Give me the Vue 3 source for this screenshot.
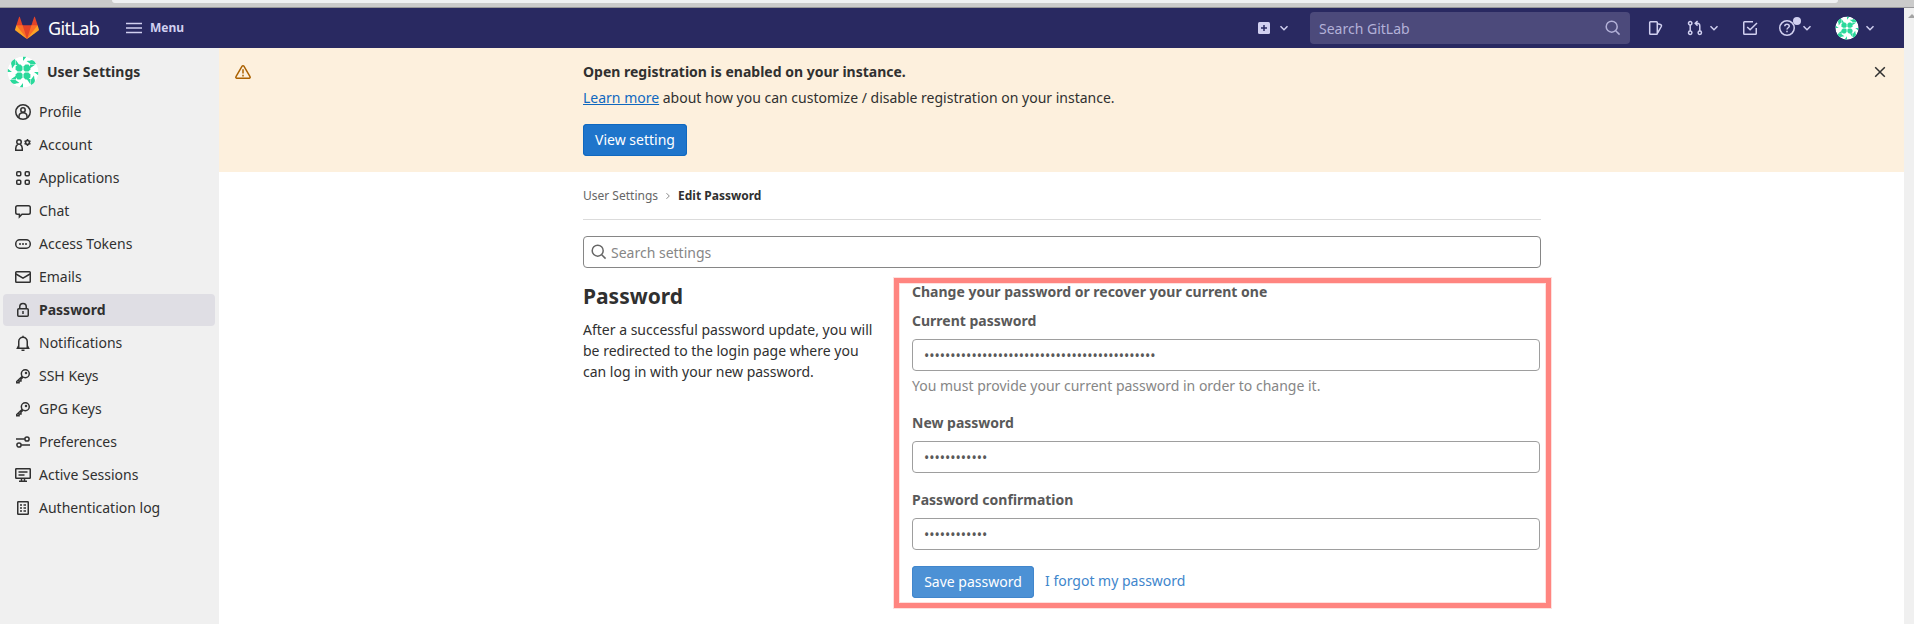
<script setup>
const nav = [
  { label: 'Profile', icon: 'profile' },
  { label: 'Account', icon: 'account' },
  { label: 'Applications', icon: 'apps' },
  { label: 'Chat', icon: 'chat' },
  { label: 'Access Tokens', icon: 'token' },
  { label: 'Emails', icon: 'mail' },
  { label: 'Password', icon: 'lock', active: true },
  { label: 'Notifications', icon: 'bell' },
  { label: 'SSH Keys', icon: 'key' },
  { label: 'GPG Keys', icon: 'key' },
  { label: 'Preferences', icon: 'prefs' },
  { label: 'Active Sessions', icon: 'monitor' },
  { label: 'Authentication log', icon: 'log' },
]
const icons = {
  profile: '<circle cx="8" cy="8" r="7.25"/><circle cx="8" cy="6" r="2.2"/><path d="M4 13.6v-1.1C4 10.300 5.600 8.700 8 8.700s4 1.600 4 3.800v1.100"/>',
  account: '<circle cx="4" cy="5" r="2.250"/><path d="M2.700 7.300C1.300 8.300.75 9.700.75 11.300v2h6.500v-2c0-1.600-.55-3-1.950-4"/><circle cx="12.500" cy="5.500" r="1.900"/><path d="M12.500 2v1.200M12.500 7.800V9M9.500 3.800l1 .6M14.500 6.600l1 .6M15.500 3.800l-1 .6M10.500 6.600l-1 .6"/>',
  apps: '<rect x="1.750" y="1.750" width="4" height="4" rx="1"/><rect x="10.250" y="1.750" width="4" height="4" rx="1"/><rect x="1.750" y="10.250" width="4" height="4" rx="1"/><rect x="10.250" y="10.250" width="4" height="4" rx="1"/>',
  chat: '<path d="M2.500 2.750h11a1.750 1.750 0 0 1 1.750 1.750v5a1.750 1.750 0 0 1-1.750 1.750H7l-2.600 2.600v-2.600H2.500A1.750 1.750 0 0 1 .75 9.500v-5A1.750 1.750 0 0 1 2.500 2.750z"/>',
  token: '<rect x=".75" y="3.750" width="14.500" height="8.500" rx="4"/><path d="M4 8h2M7 8h2M10 8h2"/>',
  mail: '<rect x=".75" y="2.750" width="14.500" height="10.500" rx=".8"/><path d="M1 5l7 4.200L15 5"/>',
  lock: '<rect x="2.750" y="6.750" width="10.500" height="7.500" rx="1"/><path d="M4.750 6.500V4.800a3.250 3.250 0 0 1 6.500 0v1.700M8 9v3"/>',
  bell: '<path d="M8 .8v1M3.750 12.500V6.500a4.250 4.250 0 0 1 8.500 0v6M3.750 10.500L2.400 13.250h11.200l-1.350-2.750M6.500 15.200h3"/>',
  key: '<circle cx="10.300" cy="5.700" r="3.950"/><path d="M7.300 8.300l-5.550 5.200v1.300h2.300v-1.900h1.900v-1.700l2-1.900"/><circle cx="11" cy="5" r=".5"/>',
  prefs: '<circle cx="12" cy="5" r="2.100"/><circle cx="4" cy="11" r="2.100"/><path d="M1 5h8.800M6.200 11H15"/>',
  monitor: '<rect x=".75" y="1.750" width="14.500" height="9.500" rx=".6"/><path d="M3.500 5h9M3.500 8h6M6.500 11v3M9.500 11v3M4 14.250h8"/>',
  log: '<rect x="2.750" y="1.750" width="10.500" height="12.500" rx=".6"/><path d="M5 5h2M8.500 5H11M5 8h2M8.500 8H11M5 11h2M8.500 11H11"/>',
}
const settings = '<circle cx="6.700" cy="6.700" r="5.500"/><path d="M10.700 10.700L14.600 14.600"/>'
const current = 'x'.repeat(44)
const fresh = 'x'.repeat(12)
</script>

<template>
  <div class="page">
    <div class="chrome"><div class="address"></div></div>
    <div class="shell">
      <div class="app">
        <header class="navbar">
          <svg class="tanuki" viewBox="0 0 36 36">
            <path fill="#e24329" d="M2 14l9.380 9v-9l-4-12.280c-.205-.632-1.176-.632-1.380 0z" />
            <path fill="#e24329" d="M34 14l-9.380 9v-9l4-12.280c.205-.632 1.176-.632 1.380 0z" />
            <path fill="#e24329" d="M18 34.380 3 14h30z" />
            <path fill="#fc6d26" d="M18 34.380 11.380 14H2l4 11z" />
            <path fill="#fc6d26" d="M18 34.380 24.620 14H34l-4 11z" />
            <path fill="#fca326" d="M2 14L.1 20.160c-.18.565 0 1.200.5 1.560L18 34.380z" />
            <path fill="#fca326" d="M34 14l1.900 6.160c.18.565 0 1.200-.5 1.560L18 34.380z" />
          </svg>
          <span class="brand">GitLab</span>
          <svg class="ic burger" viewBox="0 0 16 16"><path d="M0 3.400h16M0 8h16M0 12.600h16" /></svg>
          <span class="menu">Menu</span>
          <div class="tools">
            <svg class="ic plus" viewBox="0 0 16 16"><rect x="2" y="2" width="12" height="12" rx="1.500" fill="#d1d0f0" stroke="none" /><path d="M8 5v6M5 8h6" stroke="#292961" /></svg>
            <svg class="chev c1" viewBox="0 0 10 10"><path d="M1.500 3.200L5 6.700l3.500-3.500" /></svg>
            <div class="search"><span>Search GitLab</span><svg class="ic" viewBox="0 0 16 16" v-html="settings"></svg></div>
            <svg class="ic issues" viewBox="0 0 16 16"><path d="M2.500 1.750h6a.8.8 0 0 1 .8.8v10.900a.8.8 0 0 1-.8.8h-6a.8.8 0 0 1-.8-.8V2.550a.8.8 0 0 1 .8-.8zM9.500 3.600l2.900.9c.9.300 1.300 1 1 1.800L9.700 12.800" /></svg>
            <svg class="ic merge" viewBox="0 0 16 16"><circle cx="3.200" cy="3.200" r="1.700" /><circle cx="3.200" cy="12.800" r="1.700" /><circle cx="12.800" cy="12.800" r="1.700" /><path d="M3.200 5v6M12.800 11V6c0-1.700-.8-2.700-2.500-2.700H8.500M10.600 1L8.200 3.300l2.400 2.300" /></svg>
            <svg class="chev c2" viewBox="0 0 10 10"><path d="M1.500 3.200L5 6.700l3.500-3.500" /></svg>
            <svg class="ic todo" viewBox="0 0 16 16"><path d="M11 1.750H2.500a.75.75 0 0 0-.75.75v11c0 .4.300.75.75.75h11c.4 0 .75-.35.75-.75V8M5.200 7l2.900 2.800L15 3" /></svg>
            <div class="help">
              <svg class="ic" viewBox="0 0 16 16"><circle cx="8" cy="8" r="7.250" /><path d="M5.800 6.300C5.800 5 6.700 4.200 8 4.200s2.250.8 2.250 2c0 1.500-2.250 1.600-2.250 3.300M8 10.800v1.500" /></svg>
              <i class="dot"></i>
            </div>
            <svg class="chev c3" viewBox="0 0 10 10"><path d="M1.500 3.200L5 6.700l3.500-3.500" /></svg>
            <svg class="face" viewBox="0 0 32 32">
              <use href="#identicon" />
            </svg>
            <svg class="chev c4" viewBox="0 0 10 10"><path d="M1.500 3.200L5 6.700l3.500-3.500" /></svg>
          </div>
        </header>

        <div class="body">
          <aside class="sidebar">
            <div class="owner">
              <svg class="avatar" viewBox="0 0 32 32">
                <defs>
                  <clipPath id="disc"><circle cx="16" cy="16" r="15.500" /></clipPath>
                  <g id="identicon" clip-path="url(#disc)">
                    <circle cx="16" cy="16" r="15.500" fill="#fff" />
                    <g fill="#2ad99b">
                      <g v-for="a in [0, 90, 180, 270]" :key="a" :transform="`rotate(${a} 16 16)`">
                        <path d="M11 8.600h2.500l2 2v3.400l-1.500 1.500h-3.400l-2-2v-3z" />
                        <path d="M8.500 3.500V9h3.800zM4.500 4.500L8 3v5.500H4zM16 .5h3.500L16 5zM4.500 8.500H8L5 12.500z" />
                      </g>
                    </g>
                  </g>
                </defs>
                <use href="#identicon" />
              </svg>
              <span>User Settings</span>
            </div>
            <nav>
              <a v-for="n in nav" :key="n.label" class="item" :class="{ active: n.active }">
                <svg class="ic" viewBox="0 0 16 16" v-html="icons[n.icon]"></svg>
                <span>{{ n.label }}</span>
              </a>
            </nav>
          </aside>

          <main>
            <section class="banner">
              <svg class="ic warn" viewBox="0 0 16 16"><path d="M7.100 2.200a1.050 1.050 0 0 1 1.800 0l6.100 10.500a.95.95 0 0 1-.85 1.500H1.850a.95.95 0 0 1-.85-1.500zM8 5.200v4.300M8 10.800v1.600" /></svg>
              <div class="notice">
                <h2>Open registration is enabled on your instance.</h2>
                <p><a>Learn more</a> about how you can customize / disable registration on your instance.</p>
                <button class="btn">View setting</button>
              </div>
              <svg class="ic close" viewBox="0 0 16 16"><path d="M3.200 3.200l9.600 9.600M12.800 3.200l-9.600 9.600" /></svg>
            </section>

            <div class="content">
              <div class="crumbs">
                <span>User Settings</span>
                <svg viewBox="0 0 8 8"><path d="M2.500 1.200L5.300 4 2.500 6.800" /></svg>
                <b>Edit Password</b>
              </div>
              <div class="find">
                <svg class="ic" viewBox="0 0 16 16" v-html="settings"></svg>
                <span>Search settings</span>
              </div>
              <div class="columns">
                <div class="intro">
                  <h1>Password</h1>
                  <p>After a successful password update, you will be redirected to the login page where you can log in with your new password.</p>
                </div>
                <form class="panel" @submit.prevent>
                  <h3>Change your password or recover your current one</h3>
                  <label>Current password</label>
                  <input type="password" :value="current" />
                  <p class="hint">You must provide your current password in order to change it.</p>
                  <label class="l2">New password</label>
                  <input type="password" :value="fresh" />
                  <label class="l3">Password confirmation</label>
                  <input type="password" :value="fresh" />
                  <div class="actions">
                    <button class="btn save">Save password</button>
                    <a>I forgot my password</a>
                  </div>
                </form>
              </div>
            </div>
          </main>
        </div>
      </div>
      <div class="scrollbar"><i></i></div>
    </div>
  </div>
</template>

<style>
body { background: #fff; overflow: hidden; }
</style>
<style scoped>
* { box-sizing: border-box; }
.page { width: 1914px; height: 624px; overflow: hidden; font: 14px/21px "Noto Sans", sans-serif; color: #303030; }
h1, h2, h3, p { margin: 0; }
svg { display: block; flex: none; }
.chrome { height: 8px; background: #cbcbcb; border-bottom: 1px solid #98989b; }
.address { margin: 0 76px 0 112px; height: 3px; background: #f0f1f3; border-radius: 0 0 10px 10px; }
.shell { display: flex; height: 616px; }
.app { width: 1904px; }
.scrollbar { width: 10px; background: #f0f0f0; padding: 6px 0 0 4px; overflow: hidden; }
.scrollbar i { display: block; width: 0; border: 4px solid transparent; border-top: 0; border-bottom-color: #a3a3a3; }
.ic { width: 16px; height: 16px; fill: none; stroke: currentColor; stroke-width: 1.5; }
.navbar { height: 40px; background: #292961; color: #d1d0f0; display: flex; align-items: center; padding-left: 15px; }
.tanuki { width: 24px; height: 24px; }
.brand { color: #fff; font-size: 18px; letter-spacing: -0.6px; margin-left: 9px; width: 78px; }
.menu { font-size: 12px; font-weight: 700; margin: -2px 0 0 8px; }
.tools { margin-left: auto; display: flex; align-items: center; height: 40px; padding-right: 29px; }
.chev { width: 10px; height: 10px; fill: none; stroke: currentColor; stroke-width: 1.5; }
.c1 { margin-left: 7px; }
.search { width: 320px; height: 32px; margin-left: 21px; background: #4c4a7b; border-radius: 4px; display: flex; align-items: center; justify-content: space-between; padding: 0 9px; color: #b3b1d8; }
.issues { margin-left: 18px; }
.merge { margin-left: 23px; }
.c2 { margin-left: 6px; }
.todo { margin-left: 23px; }
.help { position: relative; margin-left: 21px; }
.dot { position: absolute; left: 14px; top: -3px; width: 8px; height: 8px; border-radius: 50%; background: #d1d0f0; }
.c3 { margin-left: 7px; }
.face { width: 24px; height: 24px; margin-left: 23px; }
.c4 { margin-left: 6px; }
.body { display: flex; height: 576px; }
.sidebar { width: 219px; background: #f0f0f0; padding: 8px 4px 0 3px; }
.owner { display: flex; align-items: center; height: 32px; padding-left: 4px; font-weight: 700; }
.avatar { width: 32px; height: 32px; }
.owner span { margin: -1px 0 0 8px; }
nav { margin-top: 8px; }
.item { display: flex; align-items: center; height: 32px; margin-bottom: 1px; padding-left: 12px; border-radius: 4px; }
.item span { margin: -1px 0 0 8px; }
.active { background: #dfdee4; font-weight: 700; }
main { flex: 1; }
.banner { height: 124px; background: #fdf0dd; display: flex; padding: 16px 16px 0; }
.warn { color: #ab6100; }
.notice { margin: -3px 0 0 332px; flex: 1; }
.notice h2 { font-size: 14px; line-height: 21px; }
.notice p { margin-top: 5px; }
.notice p a { color: #1068bf; text-decoration: underline; }
.btn { display: block; height: 32px; padding: 0; width: 104px; margin-top: 16px; border: 0; box-shadow: inset 0 0 0 1px #1068bf; border-radius: 4px; background: #1f75cb; color: #fff; font: 14px/16px "Noto Sans", sans-serif; }
.content { width: 958px; margin-left: 364px; }
.crumbs { height: 48px; border-bottom: 1px solid #dbdbdb; display: flex; align-items: center; font-size: 12px; color: #666; }
.crumbs svg { width: 8px; height: 8px; fill: none; stroke: #888; margin: 1px 6px 0 6px; }
.crumbs b { color: #303030; }
.find { height: 32px; margin-top: 16px; border: 1px solid #868686; border-radius: 4px; display: flex; align-items: center; padding-left: 7px; color: #868686; }
.find .ic { color: #666; }
.find span { margin-left: 4px; }
.columns { display: flex; margin-top: 10px; }
.intro { width: 311px; flex: none; padding-top: 4px; }
.intro h1 { font-size: 21px; line-height: 28px; }
.intro p { width: 295px; margin-top: 9px; }
.panel { width: 657px; height: 330px; flex: none; border: 5px solid #ff8580; box-shadow: 0 0 0 1px #ffe0de, inset 0 0 0 1px #ffe0de; padding: 0 6px 0 13px; color: #595959; }
h3, label { display: block; font-size: 14px; line-height: 21px; font-weight: 700; }
h3 { margin-top: -2px; }
label { margin-top: 8px; }
input { display: block; width: 628px; height: 32px; margin: 8px 0 0; border: 1px solid #9e9e9e; border-radius: 4px; padding: 0 11px; font: 14px/16px "Noto Sans", sans-serif; color: #595959; outline: 0; background: #fff; }
.hint { margin-top: 4px; color: #868686; }
.l2 { margin-top: 16px; }
.l3 { margin-top: 16px; }
.actions { display: flex; margin-top: 16px; }
.save { width: 122px; margin: 0; background: #4c91d5; box-shadow: inset 0 0 0 1px #4186cc; }
.actions a { margin: 4px 0 0 11px; color: #4086cc; }
</style>
